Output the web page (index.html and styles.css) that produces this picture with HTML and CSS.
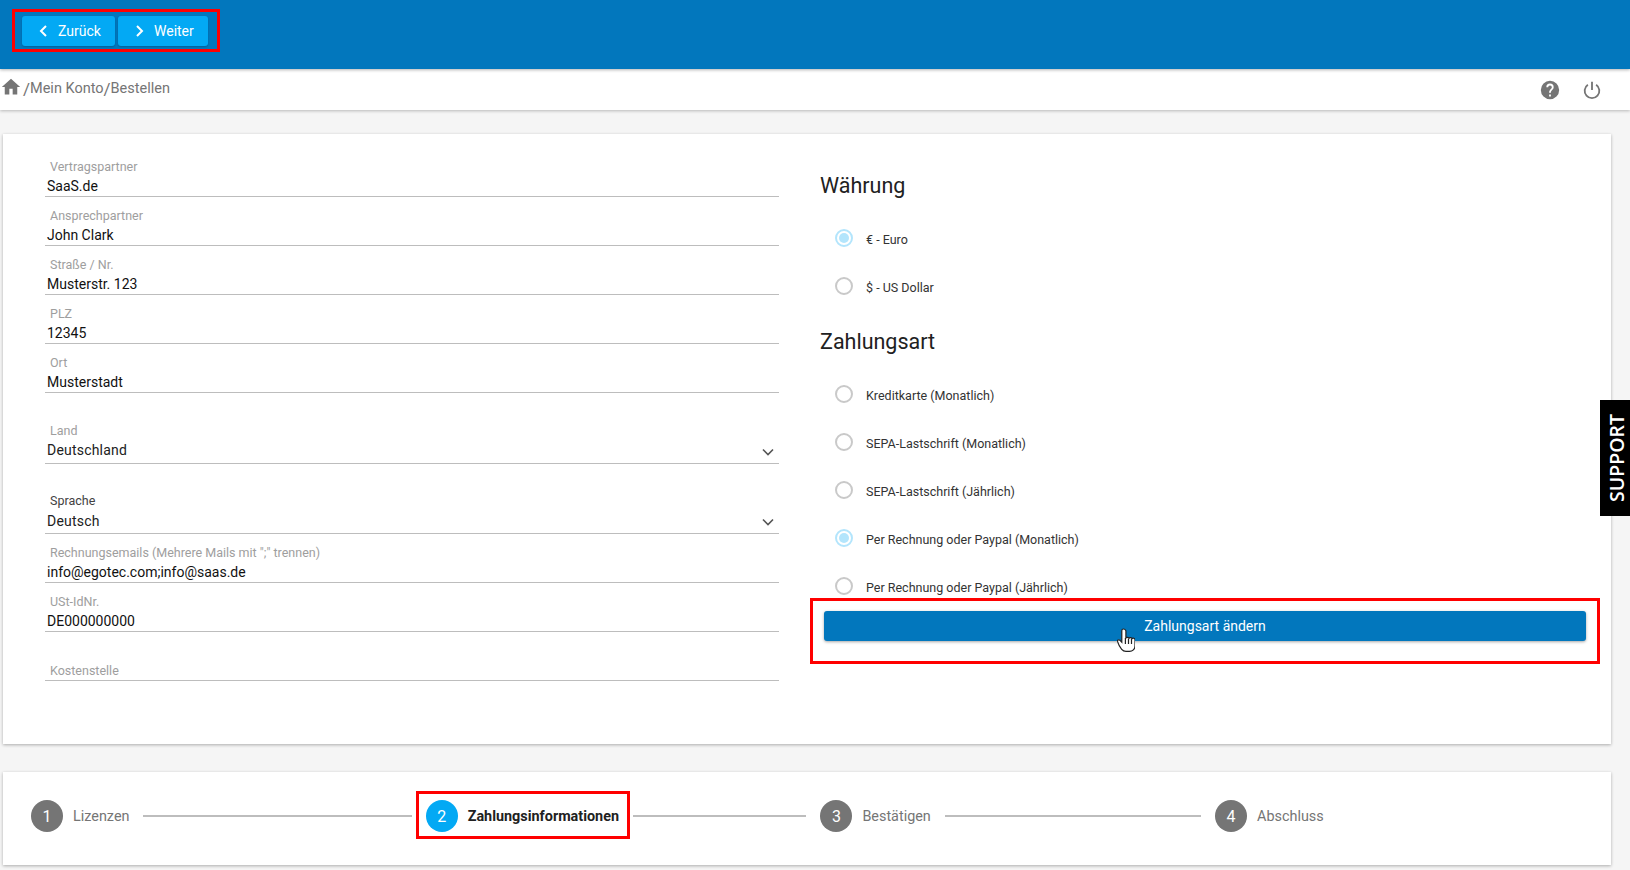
FILE: index.html
```html
<!DOCTYPE html>
<html lang="de">
<head>
<meta charset="utf-8">
<title>Bestellen</title>
<link rel="stylesheet" href="styles.css">
</head>
<body>
<header class="topbar">
  <div class="nav-group">
    <button class="nav-btn nav-back"><svg class="chev" viewBox="0 0 10 14"><path d="M8 2 3 7l5 5"/></svg>Zurück</button>
    <button class="nav-btn nav-next"><svg class="chev" viewBox="0 0 10 14"><path d="m3 2 5 5-5 5"/></svg>Weiter</button>
  </div>
</header>
<div class="crumbbar">
  <nav class="crumbs">
    <svg class="home" viewBox="0 0 24 24"><path d="M10 21v-7h4v7h5.500v-9H23L12 2 1 12h3.500v9z"/></svg>
    <span class="sep">/</span><span>Mein Konto</span><span class="sep">/</span><span>Bestellen</span>
  </nav>
  <div class="tools">
    <svg class="tool" viewBox="0 0 24 24"><path class="fill" fill-rule="evenodd" d="M12 2a10 10 0 1 0 0 20 10 10 0 0 0 0-20zm1 17h-2v-2h2zm2.070-7.750-.9.920C13.450 12.900 13 13.500 13 15h-2v-.5c0-1.100.45-2.100 1.170-2.830l1.240-1.260c.37-.36.590-.86.590-1.410a2 2 0 0 0-4 0H8a4 4 0 0 1 8 0c0 .88-.36 1.680-.93 2.250z"/></svg>
    <svg class="tool power" viewBox="0 0 24 24"><path d="M12 3v9M7.500 6.200a8 8 0 1 0 9 0"/></svg>
  </div>
</div>
<main class="page">
  <section class="card form-card">
    <div class="col-left">
      <div class="field"><span class="lbl">Vertragspartner</span><span class="val">SaaS.de</span></div>
      <div class="field"><span class="lbl">Ansprechpartner</span><span class="val">John Clark</span></div>
      <div class="field"><span class="lbl">Straße / Nr.</span><span class="val">Musterstr. 123</span></div>
      <div class="field"><span class="lbl">PLZ</span><span class="val">12345</span></div>
      <div class="field"><span class="lbl">Ort</span><span class="val">Musterstadt</span></div>
      <div class="field select land"><span class="lbl">Land</span><span class="val">Deutschland</span><svg class="caret" viewBox="0 0 12 8"><path d="m1 1.500 5 5 5-5"/></svg></div>
      <div class="field select lang"><span class="lbl dark">Sprache</span><span class="val">Deutsch</span><svg class="caret" viewBox="0 0 12 8"><path d="m1 1.500 5 5 5-5"/></svg></div>
      <div class="field"><span class="lbl">Rechnungsemails (Mehrere Mails mit ";" trennen)</span><span class="val">info@egotec.com;info@saas.de</span></div>
      <div class="field"><span class="lbl">USt-IdNr.</span><span class="val">DE000000000</span></div>
      <div class="field"><span class="lbl empty">Kostenstelle</span></div>
    </div>
    <div class="col-right">
      <h2 class="heading">Währung</h2>
      <div class="radio on"><i></i>€ - Euro</div>
      <div class="radio"><i></i>$ - US Dollar</div>
      <h2 class="heading second">Zahlungsart</h2>
      <div class="radio"><i></i>Kreditkarte (Monatlich)</div>
      <div class="radio"><i></i>SEPA-Lastschrift (Monatlich)</div>
      <div class="radio"><i></i>SEPA-Lastschrift (Jährlich)</div>
      <div class="radio on"><i></i>Per Rechnung oder Paypal (Monatlich)</div>
      <div class="radio"><i></i>Per Rechnung oder Paypal (Jährlich)</div>
      <div class="action">
        <button class="primary">Zahlungsart ändern</button>
        <svg class="cursor" viewBox="0 1 18 24"><path d="M6.500 2c-1 0-1.700.7-1.700 1.700v11.500l-2-2c-.9-.8-2.600-.2-2.300 1.200.8 2.800 2.500 6 4.200 8 1 1.200 2.200 2 4.300 2h3.500c3 0 5.500-2.300 5.500-5.500v-6c0-1.900-2.500-2.200-3-.8 0-1.700-2.600-1.900-3-.5 0-1.600-2.700-1.800-3.100-.3V3.700C8.400 2.700 7.500 2 6.500 2z"/><path class="ln" d="M8.400 11v6M11.500 11.500V17M14.500 12v5"/></svg>
      </div>
    </div>
  </section>
  <section class="card stepper">
    <div class="step"><span class="num">1</span><span class="step-lbl">Lizenzen</span><span class="line"></span></div>
    <div class="step active"><span class="num">2</span><span class="step-lbl">Zahlungsinformationen</span><span class="line"></span></div>
    <div class="step"><span class="num">3</span><span class="step-lbl">Bestätigen</span><span class="line"></span></div>
    <div class="step"><span class="num">4</span><span class="step-lbl">Abschluss</span></div>
  </section>
</main>
<aside class="support">SUPPORT</aside>
</body>
</html>
```
FILE: styles.css
```css
*, *::before, *::after { box-sizing: border-box; }
html, body { margin: 0; height: 870px; overflow: hidden; }
body { background: #f5f5f5; font-family: Roboto, "Liberation Sans", sans-serif; color: #212121; position: relative; }

.topbar { height: 69px; background: #0277bd; padding: 16px 0 0 22px; box-shadow: 0 1px 3px rgba(0,0,0,.3); position: relative; z-index: 2; }
.nav-group { display: flex; gap: 3px; position: relative; }
.nav-group::after { content: ""; position: absolute; left: -10px; top: -7px; width: 208px; height: 43px; border: 3px solid #f00; pointer-events: none; }
.nav-btn { height: 30px; border: 0; border-radius: 3px; background: #03a9f4; color: #fff; font: 14px Roboto, sans-serif; display: flex; align-items: center; padding: 0; box-shadow: 0 1px 2px rgba(0,0,0,.2); }
.nav-back { width: 93px; padding-left: 16px; }
.nav-next { width: 90px; padding-left: 16px; }
.chev { width: 10px; height: 14px; margin-right: 10px; fill: none; stroke: #fff; stroke-width: 2; }

.crumbbar { height: 41px; background: #fff; display: flex; justify-content: space-between; align-items: center; box-shadow: 0 1px 3px rgba(0,0,0,.25); position: relative; z-index: 1; }
.crumbs { display: flex; align-items: center; padding-left: 1px; font-size: 14.500px; color: #757575; padding-bottom: 2px; }
.home { width: 20px; height: 20px; fill: #757575; margin-right: 2px; margin-top: -3px; }
.sep { font-size: 17px; }
.tools { display: flex; gap: 20px; padding-right: 27px; padding-top: 1px; }
.tool { width: 22px; height: 22px; display: block; }
.fill { fill: #757575; }
.power { fill: none; stroke: #757575; stroke-width: 2; }

.page { padding: 24px 19px 0 3px; display: flex; flex-direction: column; gap: 28px; }
.card { background: #fff; box-shadow: 0 1px 3px rgba(0,0,0,.3); }
.form-card { height: 610px; display: grid; grid-template-columns: 734px 1fr; column-gap: 32px; padding: 14px 11px 0 42px; }

.field { height: 49px; display: flex; flex-direction: column; justify-content: flex-end; border-bottom: 1px solid #bdbdbd; position: relative; }
.land { height: 71px; padding-bottom: 3px; }
.lang { height: 70px; padding-bottom: 2px; }
.lbl { font-size: 12.500px; line-height: 14px; color: #9e9e9e; margin-left: 5px; margin-bottom: 4px; }
.lbl.dark { color: #424242; margin-bottom: 5px; }
.lbl.empty { margin-bottom: 2px; }
.val { font-size: 14px; line-height: 16px; color: #111; margin: 0 0 2px 2px; }
.select .val { color: #212121; letter-spacing: .2px; }
.caret { position: absolute; right: 5px; bottom: 7px; width: 12px; height: 8px; fill: none; stroke: #555; stroke-width: 1.600; }

.heading { margin: 0; height: 56px; line-height: 56px; font-size: 21.500px; font-weight: 400; color: #212121; padding-left: 9px; margin-top: 10px; }
.heading.second { margin-top: 4px; }
.col-right { display: flex; flex-direction: column; }
.radio { height: 48px; display: flex; align-items: center; font-size: 12.500px; color: #333; padding: 2px 0 0 24px; flex: none; }
.radio i { width: 18px; height: 18px; border-radius: 50%; border: 2px solid #c9c9c9; margin: -2px 13px 0 0; position: relative; flex: none; }
.radio.on i { border-color: #b3e5fc; }
.radio.on i::after { content: ""; position: absolute; inset: 2px; border-radius: 50%; background: #b3e5fc; }

.action { position: relative; height: 66px; margin: -12px 0 0 -1px; padding: 10px 11px 0 11px; border: 3px solid #f00; }
.primary { width: 100%; height: 30px; border: 0; border-radius: 3px; background: #0277bd; color: #fff; font: 14px Roboto, sans-serif; box-shadow: 0 1px 3px rgba(0,0,0,.35); display: block; }
.cursor { position: absolute; left: 304px; top: 27px; width: 18px; height: 24px; fill: #fff; stroke: #222; stroke-width: 1.200; }
.cursor .ln { fill: none; }

.stepper { height: 93px; display: grid; grid-template-columns: repeat(3, 394.700px) 1fr; align-items: center; padding: 0 0 5px 28px; }
.step { display: flex; align-items: center; padding-right: 14px; position: relative; font-size: 14.400px; color: #757575; }
.num { width: 32px; height: 32px; border-radius: 50%; background: #757575; color: #fff; font-size: 16px; display: flex; align-items: center; justify-content: center; margin-right: 10px; flex: none; }
.step-lbl { white-space: nowrap; }
.line { flex: 1; height: 2px; background: #bdbdbd; margin-left: 14px; }
.active .num { background: #03a9f4; }
.active .step-lbl { color: #212121; font-weight: 700; }
.active::before { content: ""; position: absolute; left: -10px; top: -9px; width: 214px; height: 48px; border: 3px solid #f00; }

.support { position: absolute; right: 0; top: 400px; width: 30px; height: 116px; background: #000; color: #fff; font: 600 19.500px "Open Sans", sans-serif; writing-mode: vertical-rl; transform: rotate(180deg); display: flex; align-items: center; justify-content: center; z-index: 3; padding-right: 2px; }
```
